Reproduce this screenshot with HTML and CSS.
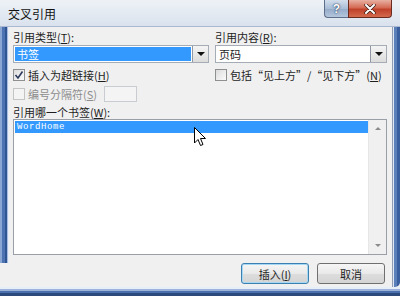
FILE: index.html
```html
<!DOCTYPE html>
<html lang="zh-CN">
<head>
  <meta charset="UTF-8">
  <title>交叉引用</title>
  <link rel="stylesheet" href="styles.css">
</head>
<body>

  <div class="window">
    <div class="titlebar">
      <span class="title">交叉引用</span>
      <div class="caption-buttons">
        <span class="cap-btn help">?</span>
        <span class="cap-btn close">
          <svg width="12" height="10" viewBox="0 0 12 10"><path d="M2 1 L10 9 M10 1 L2 9" stroke="#3a1a12" stroke-width="3.4" stroke-linecap="round"/><path d="M2 1 L10 9 M10 1 L2 9" stroke="#fff" stroke-width="2" stroke-linecap="round"/></svg>
        </span>
      </div>
    </div>

    <div class="frame">
      <div class="edge-left"></div>

      <div class="client">
        <div class="two-col">
          <div class="col col-type">
            <label class="field-label">引用类型(<u>T</u>):</label>
            <div class="combo">
              <span class="combo-value selected">书签</span>
              <span class="combo-arrow"><i class="tri-down"></i></span>
            </div>
          </div>
          <div class="col col-content">
            <label class="field-label">引用内容(<u>R</u>):</label>
            <div class="combo">
              <span class="combo-value">页码</span>
              <span class="combo-arrow"><i class="tri-down"></i></span>
            </div>
          </div>
        </div>

        <div class="two-col check-row">
          <div class="col col-type">
            <span class="check checked">
              <svg width="10" height="10" viewBox="0 0 10 10"><path d="M1.5 5 L4 8 L8.5 1.5" fill="none" stroke="#2b3a5c" stroke-width="1.6"/></svg>
            </span>
            <span class="check-text">插入为超链接(<u>H</u>)</span>
          </div>
          <div class="col col-content">
            <span class="check"></span>
            <span class="check-text">包括“见上方”/“见下方”(<u>N</u>)</span>
          </div>
        </div>

        <div class="sep-row">
          <span class="check disabled"></span>
          <span class="check-text muted">编号分隔符(<u>S</u>)</span>
          <span class="sep-input"></span>
        </div>

        <label class="field-label list-label">引用哪一个书签(<u>W</u>):</label>
        <div class="listbox">
          <div class="list-items">
            <div class="list-item selected">WordHome</div>
          </div>
          <div class="scrollbar">
            <span class="scroll-btn"><i class="tri-up"></i></span>
            <span class="scroll-track"></span>
            <span class="scroll-btn"><i class="tri-down small"></i></span>
          </div>
        </div>

        <div class="actions">
          <button class="btn default">插入(<u>I</u>)</button>
          <button class="btn">取消</button>
        </div>
      </div>

      <div class="edge-right"></div>
    </div>

    <div class="edge-bottom"></div>

    <svg class="cursor" width="13" height="20" viewBox="0 0 13 20">
      <path d="M0.5 0.5 L0.5 16 L4 12.5 L6.5 18.5 L9 17.5 L6.5 11.5 L11.5 11.5 Z" fill="#fff" stroke="#000" stroke-width="1"/>
    </svg>
  </div>

</body>
</html>
```

FILE: styles.css
```css
body {
  margin: 0;
  padding: 0;
  font-family: "Noto Sans CJK SC", "Liberation Sans", sans-serif;
  font-size: 11px;
  color: #1e1e1e;
  background-color: #f0f0f0;
}
.window {
  position: relative;
  width: 400px;
  height: 296px;
  display: flex;
  flex-direction: column;
  overflow: hidden;
}
.titlebar {
  height: 27px;
  display: flex;
  justify-content: space-between;
  align-items: flex-start;
  background: linear-gradient(to bottom, #eef2f7, #d9e2ed);
  border-bottom: 1px solid #aab9cf;
  box-sizing: border-box;
}
.title {
  margin: 6px 0 0 8px;
  font-size: 12px;
  line-height: 16px;
  color: #111;
}
.caption-buttons {
  display: flex;
  margin-right: 8px;
}
.cap-btn {
  height: 18px;
  box-sizing: border-box;
  display: flex;
  align-items: center;
  justify-content: center;
  border: 1px solid #5d6e88;
  border-top: none;
}
.help {
  width: 24px;
  border-right: none;
  border-bottom-left-radius: 4px;
  background: linear-gradient(to bottom, #d3deec, #a9bdd6 50%, #93aac8 51%, #b4c6dc);
  color: #fff;
  font-family: "Liberation Sans", sans-serif;
  font-weight: bold;
  font-size: 12px;
  text-shadow: 0 0 2px #2b3d5a, 0 0 1px #2b3d5a;
}
.close {
  width: 44px;
  border-bottom-right-radius: 4px;
  border-color: #6b2b20;
  background: linear-gradient(to bottom, #e8b0a2, #d46a55 45%, #c0412a 55%, #d26a4e);
}
.frame {
  flex: 1;
  display: flex;
  background-color: #f0f0f0;
}
.edge-left {
  width: 9px;
  height: 236px;
  background: linear-gradient(to right, #8aa6d3 0, #8aa6d3 2px, #4d73b2 2px, #4d73b2 5px, #2f5593 5px, #2f5593 7px, #a8bde0 7px, #a8bde0 8px, #e6edf7 8px);
}
.edge-right {
  width: 8px;
  background: linear-gradient(to right, #8d9cb3 0, #8d9cb3 1px, #dfe8f4 1px, #dfe8f4 2px, #5b7fb9 2px, #5b7fb9 5px, #3a5f9e 5px);
  border-bottom-right-radius: 5px;
}
.client {
  flex: 1;
  padding: 3px 5px 0 4px;
  display: flex;
  flex-direction: column;
}
.two-col {
  display: flex;
  gap: 6px;
}
.col {
  display: flex;
  flex-direction: column;
}
.col-type {
  width: 196px;
}
.col-content {
  width: 172px;
}
.field-label {
  display: block;
  line-height: 14px;
  height: 14px;
  margin-bottom: 1px;
}
.combo {
  height: 18px;
  box-sizing: border-box;
  display: flex;
  border: 1px solid #a5acb5;
  background: #fff;
}
.combo-value {
  flex: 1;
  margin: 1px;
  padding-left: 2px;
  line-height: 14px;
}
.combo-value.selected {
  background-color: #3399ff;
  color: #fff;
}
.combo-arrow {
  width: 15px;
  display: flex;
  align-items: center;
  justify-content: center;
  border-left: 1px solid #8f98a4;
  background: linear-gradient(to bottom, #f4f4f4, #dcdcdc);
}
.tri-down {
  width: 0;
  height: 0;
  border-left: 4px solid transparent;
  border-right: 4px solid transparent;
  border-top: 4px solid #111;
}
.tri-down.small {
  border-left-width: 3px;
  border-right-width: 3px;
  border-top: 3px solid #8a8a8a;
}
.tri-up {
  width: 0;
  height: 0;
  border-left: 3px solid transparent;
  border-right: 3px solid transparent;
  border-bottom: 3px solid #8a8a8a;
}
.check-row {
  margin-top: 5px;
}
.check-row .col,
.sep-row {
  flex-direction: row;
  align-items: center;
  height: 14px;
}
.check {
  width: 12px;
  height: 12px;
  box-sizing: border-box;
  border: 1px solid #8e8f8f;
  background: linear-gradient(135deg, #dcdcdc, #fbfbfb);
  display: flex;
  align-items: center;
  justify-content: center;
}
.check.disabled {
  border-color: #c4c4c4;
  background: #f4f4f4;
}
.check-text {
  margin-left: 3px;
  line-height: 14px;
}
.muted {
  color: #8d8d8d;
}
.sep-row {
  display: flex;
  height: 16px;
  margin-top: 4px;
}
.sep-input {
  width: 33px;
  height: 16px;
  box-sizing: border-box;
  margin-left: 7px;
  border: 1px solid #c9ccd1;
  background: #f4f4f4;
}
.list-label {
  margin-top: 3px;
  margin-bottom: 0;
}
.listbox {
  height: 136px;
  box-sizing: border-box;
  display: flex;
  border: 1px solid #9a9ea6;
  background: #fff;
}
.list-items {
  flex: 1;
  padding: 1px 0 0 1px;
}
.list-item {
  height: 12px;
  line-height: 12px;
  padding-left: 2px;
  font-family: "Liberation Mono", monospace;
  font-size: 9px;
  letter-spacing: 0.6px;
}
.list-item.selected {
  background-color: #3399ff;
  color: #fff;
}
.scrollbar {
  width: 17px;
  display: flex;
  flex-direction: column;
  background: #f0f0f0;
  border-left: 1px solid #e6e6e6;
}
.scroll-btn {
  height: 17px;
  display: flex;
  align-items: center;
  justify-content: center;
}
.scroll-track {
  flex: 1;
}
.actions {
  display: flex;
  justify-content: flex-end;
  gap: 8px;
  margin-top: 8px;
  padding-right: 2px;
}
.btn {
  width: 68px;
  height: 21px;
  padding: 0;
  font-family: "Noto Sans CJK SC", "Liberation Sans", sans-serif;
  font-size: 11px;
  color: #1e1e1e;
  border: 1px solid #707070;
  border-radius: 3px;
  background: linear-gradient(to bottom, #f6f6f6, #e9e9e9 50%, #dddddd 51%, #d4d4d4);
  cursor: pointer;
}
.btn.default {
  border-color: #3c7fb1;
  box-shadow: inset 0 0 0 1px #a6d8f4;
}
.btn u {
  text-decoration: underline;
}
.edge-bottom {
  height: 9px;
  background: linear-gradient(to bottom, #e8eef8 0, #e8eef8 2px, #9db3d9 2px, #9db3d9 4px, #4a6fae 4px, #4a6fae 6px, #2c4a7c 6px);
}
.cursor {
  position: absolute;
  left: 194px;
  top: 127px;
}
```
